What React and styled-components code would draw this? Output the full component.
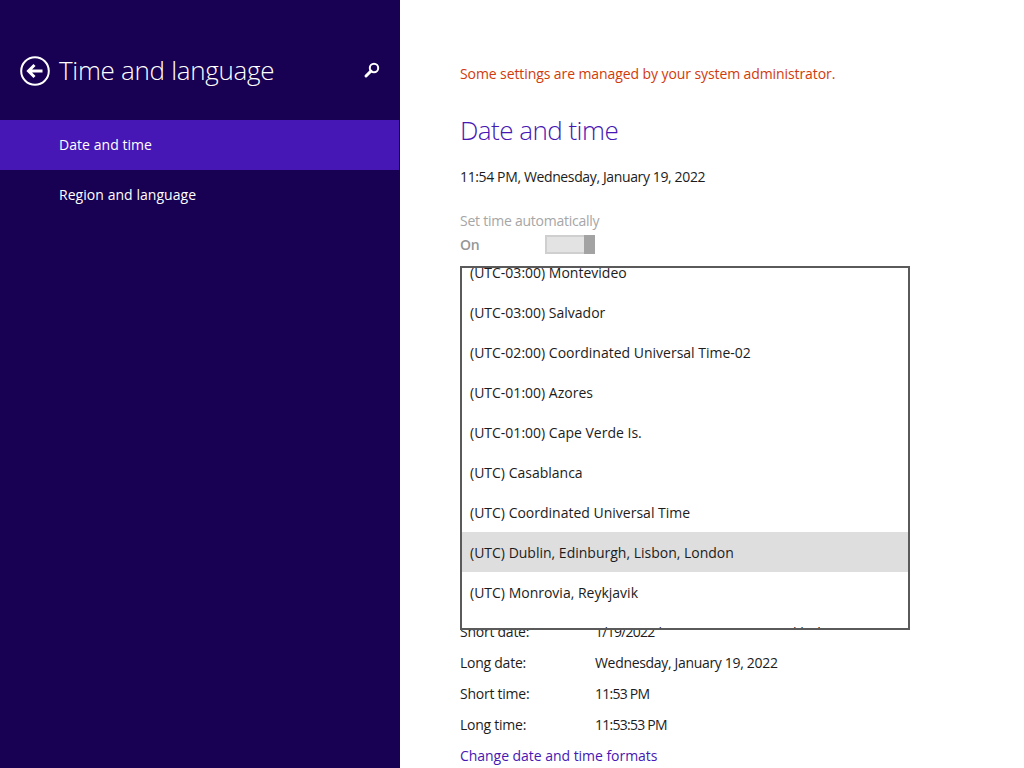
import React from "react";
import styled, { createGlobalStyle } from "styled-components";

const Global = createGlobalStyle`
  html, body { margin: 0; padding: 0; background: #fff; }
  #root { width: 1024px; height: 768px; overflow: hidden; }
  * { box-sizing: border-box; }
`;
const Page = styled.div`
  position: relative;
  display: flex;
  width: 1024px;
  height: 768px;
  overflow: hidden;
  font-family: "Open Sans", "Noto Sans", sans-serif;
  font-size: 14px;
  letter-spacing: -0.25px;
  color: #1c1c1c;
`;
const Sidebar = styled.aside`
  width: 400px;
  flex: none;
  background: #180052;
  color: #fff;
  padding-top: 51px;
`;
const Header = styled.header`
  display: flex;
  align-items: center;
  height: 38px;
  padding: 0 20px;
  margin-bottom: 31px;
`;
const BackIcon = styled.svg`
  width: 30px;
  height: 30px;
  flex: none;
  margin-top: 2px;
`;
const SideTitle = styled.h1`
  flex: 1;
  margin: 0 0 0 9px;
  font-size: 26px;
  font-weight: 300;
  letter-spacing: -0.3px;
`;
const SearchIcon = styled.svg`
  width: 18px;
  height: 18px;
  margin: 0 -1px 0 0;
`;
const NavItem = styled.div`
  display: flex;
  align-items: center;
  height: 50px;
  width: 399px;
  padding: 0 0 2px 59px;
  letter-spacing: 0.05px;
  background: ${(p) => (p.$active ? "#4617b4" : "transparent")};
`;
const Main = styled.main`
  flex: 1;
  padding: 64px 0 0 60px;
`;
const Warning = styled.p`
  margin: 0;
  line-height: 20px;
  letter-spacing: -0.09px;
  color: #d13b0c;
`;
const Title = styled.h2`
  margin: 28px 0 0;
  font-size: 26px;
  line-height: 36px;
  font-weight: 300;
  letter-spacing: -0.53px;
  color: #4617b4;
`;
const Clock = styled.p`
  margin: 19px 0 0;
  line-height: 20px;
  letter-spacing: -0.37px;
`;
const DisabledLabel = styled.div`
  margin-top: 24px;
  line-height: 20px;
  color: #a6a6a6;
`;
const ToggleRow = styled.div`
  display: flex;
  align-items: center;
  height: 20px;
  margin-top: 3px;
  color: #969696;
  font-weight: 600;
`;
const ToggleLabel = styled.span`
  width: 85px;
`;
const Toggle = styled.div`
  display: flex;
  justify-content: flex-end;
  width: 50px;
  height: 19px;
  background: #e3e3e3;
  border: 2px solid #cfcfcf;
  border-right: 0;
`;
const ToggleThumb = styled.div`
  width: 11px;
  margin: -2px 0;
  background: #a3a3a3;
`;
const Formats = styled.div`
  margin-top: 362px;
`;
const FormatRow = styled.div`
  display: flex;
  height: 31px;
  align-items: center;
`;
const FormatKey = styled.span`
  width: 135px;
`;
const FormatValue = styled.span`
  letter-spacing: ${(p) => (p.$numeric ? "-0.75px" : "-0.32px")};
`;
const FormatLink = styled.a`
  display: block;
  line-height: 31px;
  letter-spacing: -0.04px;
  color: #4617b4;
`;
const Popup = styled.div`
  position: absolute;
  left: 460px;
  top: 266px;
  width: 450px;
  height: 364px;
  background: #fff;
  border: 2px solid #5a5a5a;
  overflow: hidden;
`;
const OptionList = styled.div`
  margin-top: -16px;
`;
const Option = styled.div`
  display: flex;
  align-items: center;
  height: 40px;
  padding-left: 8px;
  letter-spacing: 0;
  background: ${(p) => (p.$selected ? "#dedede" : "transparent")};
`;

const zones = [
  "(UTC-03:00) Montevideo",
  "(UTC-03:00) Salvador",
  "(UTC-02:00) Coordinated Universal Time-02",
  "(UTC-01:00) Azores",
  "(UTC-01:00) Cape Verde Is.",
  "(UTC) Casablanca",
  "(UTC) Coordinated Universal Time",
  "(UTC) Dublin, Edinburgh, Lisbon, London",
  "(UTC) Monrovia, Reykjavik",
  "(UTC+01:00) Amsterdam, Berlin, Bern, Rome, Stockholm, Vienna",
];
const formats = [
  ["Short date:", "1/19/2022", true],
  ["Long date:", "Wednesday, January 19, 2022", false],
  ["Short time:", "11:53 PM", true],
  ["Long time:", "11:53:53 PM", true],
];

export default function App() {
  return (
    <Page>
      <Global />
      <Sidebar>
        <Header>
          <BackIcon viewBox="0 0 30 30" fill="none" stroke="#fff">
            <circle cx="15" cy="15" r="13.8" strokeWidth="2" />
            <path d="M22.5 15H9M14.5 9 8.5 15l6 6" strokeWidth="3" />
          </BackIcon>
          <SideTitle>Time and language</SideTitle>
          <SearchIcon viewBox="0 0 18 18" fill="none" stroke="#fff">
            <circle cx="11" cy="7" r="4.2" strokeWidth="2" />
            <path d="M8 10 3 15" strokeWidth="3" strokeLinecap="round" />
          </SearchIcon>
        </Header>
        <NavItem $active>Date and time</NavItem>
        <NavItem>Region and language</NavItem>
      </Sidebar>
      <Main>
        <Warning>Some settings are managed by your system administrator.</Warning>
        <Title>Date and time</Title>
        <Clock>11:54 PM, Wednesday, January 19, 2022</Clock>
        <DisabledLabel>Set time automatically</DisabledLabel>
        <ToggleRow>
          <ToggleLabel>On</ToggleLabel>
          <Toggle>
            <ToggleThumb />
          </Toggle>
        </ToggleRow>
        <Formats>
          {formats.map(([k, v, numeric]) => (
            <FormatRow key={k}>
              <FormatKey>{k}</FormatKey>
              <FormatValue $numeric={numeric}>{v}</FormatValue>
            </FormatRow>
          ))}
          <FormatLink>Change date and time formats</FormatLink>
        </Formats>
      </Main>
      <Popup>
        <OptionList>
          {zones.map((z) => (
            <Option key={z} $selected={z.includes("Dublin")}>
              {z}
            </Option>
          ))}
        </OptionList>
      </Popup>
    </Page>
  );
}
